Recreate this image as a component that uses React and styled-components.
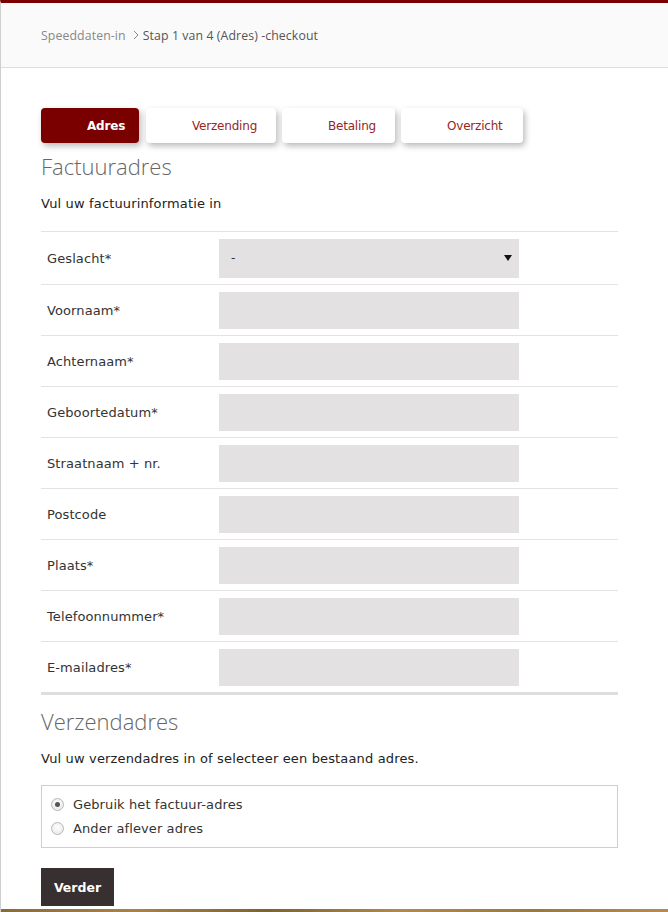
import React from "react";
import styled, { createGlobalStyle } from "styled-components";

const Global = createGlobalStyle`
  html, body { margin: 0; padding: 0; background: #fff; }
  body { font-family: "DejaVu Sans", Verdana, sans-serif; color: #222; }
  * { box-sizing: border-box; }
`;

const Page = styled.div`
  min-height: 912px;
  border-left: 1px solid #cfcfcf;
  border-top: 3px solid #7a0000;
  display: flex;
  flex-direction: column;
`;

const Header = styled.header`
  height: 65px;
  background: #fafafa;
  border-bottom: 1px solid #dedede;
  display: flex;
  align-items: center;
  padding-left: 40px;
  font-family: "Open Sans", "Segoe UI", sans-serif;
  font-size: 12.3px;
  letter-spacing: 0.1px;
  color: #777;
`;

const Crumb = styled.span`
  color: ${(p) => (p.$current ? "#555" : "#888")};
`;

const Sep = styled.span`
  margin: 0 4px 0 7px;
  display: inline-flex;
  align-items: center;
`;

const Main = styled.main`
  padding: 40px 50px 0 40px;
  flex: 1;
  display: flex;
  flex-direction: column;
`;

const Tabs = styled.nav`
  display: flex;
  gap: 6px;
`;

const Tab = styled.div`
  width: ${(p) => p.$w}px;
  height: 35px;
  border-radius: 4px;
  display: flex;
  align-items: center;
  padding-left: 46px;
  font-family: "DejaVu Sans", Verdana, sans-serif;
  font-size: 12px;
  letter-spacing: -0.2px;
  background: ${(p) => (p.$active ? "#7a0000" : "#fff")};
  color: ${(p) => (p.$active ? "#fff" : "#962626")};
  font-weight: ${(p) => (p.$active ? "bold" : "normal")};
  box-shadow: 2px 3px 6px rgba(0, 0, 0, 0.28);
  margin-right: ${(p) => p.$mr || 0}px;
`;

const H2 = styled.h2`
  margin: ${(p) => p.$mt}px 0 0;
  font-family: "Open Sans", "Segoe UI", sans-serif;
  font-weight: 300;
  font-size: 22px;
  line-height: 30px;
  color: #666;
`;

const Intro = styled.p`
  margin: ${(p) => p.$mt}px 0 0;
  font-size: 13px;
  line-height: 16px;
  color: #222;
  letter-spacing: 0.15px;
`;

const Fields = styled.div`
  margin-top: 19px;
  border-top: 1px solid #e3e3e3;
  border-bottom: 3px solid #dedede;
`;

const Row = styled.div`
  height: ${(p) => (p.$first ? 52 : 51)}px;
  display: flex;
  align-items: center;
  border-top: ${(p) => (p.$first ? "none" : "1px solid #e3e3e3")};
`;

const Label = styled.label`
  width: 178px;
  padding-left: 6px;
  font-size: 13px;
  letter-spacing: 0.1px;
  color: #333;
`;

const Input = styled.div`
  width: 300px;
  height: ${(p) => (p.$h ? p.$h : 37)}px;
  background: #e3e1e2;
  display: flex;
  align-items: center;
  justify-content: space-between;
  padding: 0 7px 0 12px;
  font-size: 12px;
  color: #333;
`;

const Box = styled.div`
  margin-top: 18px;
  border: 1px solid #cfcfcf;
  padding: 10px 8px 10px;
  display: flex;
  flex-direction: column;
  gap: 7px;
`;

const Option = styled.label`
  display: flex;
  align-items: center;
  gap: 9px;
  font-size: 13px;
  letter-spacing: 0.1px;
  color: #333;
  line-height: 17px;
`;

const Radio = styled.span`
  width: 13px;
  height: 13px;
  border-radius: 50%;
  border: 1px solid #b8b8b8;
  background: radial-gradient(circle at 50% 40%, #fff 0%, #e4e4e4 100%);
  display: flex;
  align-items: center;
  justify-content: center;
  margin-left: 1px;
  &::after {
    content: "";
    width: 5px;
    height: 5px;
    border-radius: 50%;
    background: ${(p) => (p.$checked ? "#555" : "transparent")};
  }
`;

const Button = styled.button`
  margin-top: 20px;
  align-self: flex-start;
  width: 73px;
  height: 38px;
  border: none;
  background: #383030;
  color: #fff;
  font-family: "DejaVu Sans", Verdana, sans-serif;
  font-weight: bold;
  font-size: 12.5px;
  padding: 0;
`;

const Spacer = styled.div`
  flex: 1;
`;

const BottomStrip = styled.div`
  height: 3px;
  background: linear-gradient(90deg, #8a6a3a, #a88248 20%, #7d6233 40%, #b08a4c 60%, #9a7840 80%, #b48c50);
`;

const fields = [
  "Voornaam*",
  "Achternaam*",
  "Geboortedatum*",
  "Straatnaam + nr.",
  "Postcode",
  "Plaats*",
  "Telefoonnummer*",
  "E-mailadres*",
];

export default function App() {
  return (
    <>
      <Global />
      <Page>
        <Header>
          <Crumb>Speeddaten-in</Crumb>
          <Sep>
            <svg width="6" height="10" viewBox="0 0 6 10">
              <path d="M1 1l4 4-4 4" fill="none" stroke="#888" strokeWidth="1" />
            </svg>
          </Sep>
          <Crumb $current>Stap 1 van 4 (Adres) -checkout</Crumb>
        </Header>
        <Main>
          <Tabs>
            <Tab $active $w={98} $mr={1}>Adres</Tab>
            <Tab $w={130}>Verzending</Tab>
            <Tab $w={113}>Betaling</Tab>
            <Tab $w={122}>Overzicht</Tab>
          </Tabs>
          <H2 $mt={8}>Factuuradres</H2>
          <Intro $mt={15}>Vul uw factuurinformatie in</Intro>
          <Fields>
            <Row $first>
              <Label>Geslacht*</Label>
              <Input $h={39}>
                <span>-</span>
                <svg width="8" height="6" viewBox="0 0 8 6">
                  <path d="M0 0h8L4 6z" fill="#111" />
                </svg>
              </Input>
            </Row>
            {fields.map((f) => (
              <Row key={f}>
                <Label>{f}</Label>
                <Input />
              </Row>
            ))}
          </Fields>
          <H2 $mt={11}>Verzendadres</H2>
          <Intro $mt={15}>Vul uw verzendadres in of selecteer een bestaand adres.</Intro>
          <Box>
            <Option>
              <Radio $checked />
              Gebruik het factuur-adres
            </Option>
            <Option>
              <Radio />
              Ander aflever adres
            </Option>
          </Box>
          <Button>Verder</Button>
          <Spacer />
        </Main>
        <BottomStrip />
      </Page>
    </>
  );
}
